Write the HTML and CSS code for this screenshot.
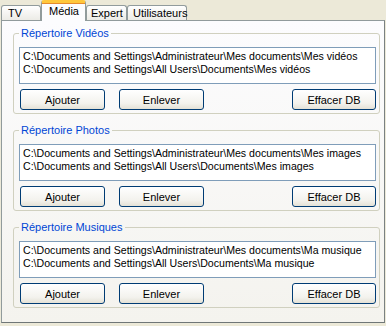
FILE: index.html
```html
<!DOCTYPE html>
<html>
<head>
  <title>Options</title>
  <link rel="stylesheet" href="styles.css">
</head>
<body>
  <div class="tabs">
    <div class="tab tab-tv">TV</div>
    <div class="tab tab-media active">Média</div>
    <div class="tab tab-expert">Expert</div>
    <div class="tab tab-users">Utilisateurs</div>
  </div>
  <div class="panel">
    <fieldset class="group">
      <legend>Répertoire Vidéos</legend>
      <div class="listbox">
        <div>C:\Documents and Settings\Administrateur\Mes documents\Mes vidéos</div>
        <div>C:\Documents and Settings\All Users\Documents\Mes vidéos</div>
      </div>
      <div class="buttons">
        <button type="button">Ajouter</button>
        <button type="button">Enlever</button>
        <button type="button" class="btn-clear">Effacer DB</button>
      </div>
    </fieldset>
    <fieldset class="group">
      <legend>Répertoire Photos</legend>
      <div class="listbox">
        <div>C:\Documents and Settings\Administrateur\Mes documents\Mes images</div>
        <div>C:\Documents and Settings\All Users\Documents\Mes images</div>
      </div>
      <div class="buttons">
        <button type="button">Ajouter</button>
        <button type="button">Enlever</button>
        <button type="button" class="btn-clear">Effacer DB</button>
      </div>
    </fieldset>
    <fieldset class="group">
      <legend>Répertoire Musiques</legend>
      <div class="listbox">
        <div>C:\Documents and Settings\Administrateur\Mes documents\Ma musique</div>
        <div>C:\Documents and Settings\All Users\Documents\Ma musique</div>
      </div>
      <div class="buttons">
        <button type="button">Ajouter</button>
        <button type="button">Enlever</button>
        <button type="button" class="btn-clear">Effacer DB</button>
      </div>
    </fieldset>
  </div>
</body>
</html>
```

FILE: styles.css
```css
body {
  margin: 0;
  background-color: #ece9d8;
  font-family: "Liberation Sans", Arial, sans-serif;
  font-size: 11px;
  color: #000;
}
.tabs {
  display: flex;
  align-items: flex-end;
  height: 20px;
  padding-left: 1px;
}
.tab {
  box-sizing: border-box;
  height: 15px;
  line-height: 14px;
  padding-left: 6px;
  border: 1px solid #919b9c;
  border-bottom: none;
  border-radius: 3px 3px 0 0;
  background: linear-gradient(#ffffff, #ecebe6);
}
.tab-tv {
  width: 40px;
}
.tab-media {
  width: 45px;
  padding-left: 7px;
}
.tab-expert {
  width: 41px;
  padding-left: 4px;
}
.tab-users {
  width: 60px;
  padding-left: 5px;
}
.tab.active {
  position: relative;
  z-index: 1;
  height: 21px;
  margin-bottom: -1px;
  line-height: 16px;
  border-top: 3px solid #ffc73c;
  background: #fcfcfe;
  box-shadow: inset 0 1px 0 #e68b2c;
}
.panel {
  box-sizing: border-box;
  height: 303px;
  margin: 0 1px;
  border: 1px solid #919b9c;
  border-right-color: #7a8182;
  border-bottom-color: #6f7677;
  background: linear-gradient(#fcfcfe, #f4f3ee);
  padding-top: 6px;
}
.group {
  min-width: 0;
  margin: 0 4px 10px 11px;
  padding: 7px 3px 3px 5px;
  border: 1px solid #d0d0bf;
  border-radius: 3px;
}
.group legend {
  padding: 0 2px;
  line-height: 13px;
  color: #0046d5;
}
.listbox {
  box-sizing: border-box;
  height: 37px;
  padding: 2px 3px;
  border: 1px solid #7f9db9;
  background-color: #fff;
  font-size: 10.6px;
  line-height: 13px;
  white-space: nowrap;
  overflow: hidden;
}
.buttons {
  display: flex;
  margin-top: 5px;
  padding-left: 1px;
}
button {
  box-sizing: border-box;
  width: 85px;
  height: 21px;
  margin-right: 14px;
  padding: 0;
  font-family: inherit;
  font-size: 11px;
  color: #000;
  border: 1px solid #003c74;
  border-radius: 3px;
  background: linear-gradient(#ffffff, #f3f2ed 70%, #e4e1d6);
}
.btn-clear {
  width: 84px;
  margin-left: auto;
  margin-right: 0;
}
```
